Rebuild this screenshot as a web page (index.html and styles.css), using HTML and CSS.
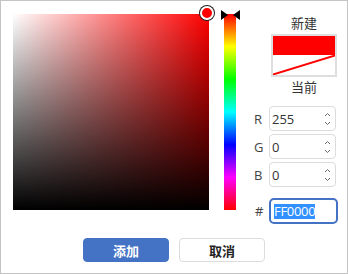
FILE: index.html
```html
<!DOCTYPE html>
<html lang="zh">
<head>
<meta charset="utf-8">
<link rel="stylesheet" href="styles.css">
</head>
<body>
<div class="dialog">
  <div class="main">
    <div class="sv">
      <div class="sv-white"></div>
      <div class="sv-black"></div>
      <div class="sv-handle"></div>
    </div>
    <div class="hue">
      <svg class="hue-marker" width="20" height="12" viewBox="0 0 20 12">
        <polygon points="0,1 7,6 0,11" fill="#000"/>
        <polygon points="19,1 12,6 19,11" fill="#000"/>
      </svg>
    </div>
    <div class="side">
      <div class="preview">
        <div class="cap">新建</div>
        <div class="swatch">
          <div class="sw-new"></div>
          <div class="sw-old">
            <svg width="62" height="20" viewBox="0 0 62 20"><line x1="0" y1="19.5" x2="62" y2="0.5" stroke="#ff0000" stroke-width="2"/></svg>
          </div>
        </div>
        <div class="cap">当前</div>
      </div>
      <div class="fields">
        <span class="lbl">R</span>
        <div class="num"><span class="val">255</span><span class="spin"><svg width="7" height="16" viewBox="0 0 7 16"><path d="M1 5 L3.5 2.5 L6 5" fill="none" stroke="#666" stroke-width="1"/><path d="M1 11 L3.5 13.5 L6 11" fill="none" stroke="#666" stroke-width="1"/></svg></span></div>
        <span class="lbl">G</span>
        <div class="num"><span class="val">0</span><span class="spin"><svg width="7" height="16" viewBox="0 0 7 16"><path d="M1 5 L3.5 2.5 L6 5" fill="none" stroke="#666" stroke-width="1"/><path d="M1 11 L3.5 13.5 L6 11" fill="none" stroke="#666" stroke-width="1"/></svg></span></div>
        <span class="lbl">B</span>
        <div class="num"><span class="val">0</span><span class="spin"><svg width="7" height="16" viewBox="0 0 7 16"><path d="M1 5 L3.5 2.5 L6 5" fill="none" stroke="#666" stroke-width="1"/><path d="M1 11 L3.5 13.5 L6 11" fill="none" stroke="#666" stroke-width="1"/></svg></span></div>
      </div>
      <div class="hexrow">
        <span class="lbl">#</span>
        <div class="hex"><span class="sel">FF0000</span></div>
      </div>
    </div>
  </div>
  <div class="buttons">
    <button class="btn primary">添加</button>
    <button class="btn">取消</button>
  </div>
</div>
</body>
</html>
```
FILE: styles.css
```css
html, body {
  margin: 0;
  padding: 0;
  background: #fff;
}
.dialog {
  width: 348px;
  height: 274px;
  box-sizing: border-box;
  border: 1px solid #c4c4c4;
  font-family: "Open Sans", "Noto Sans CJK SC", sans-serif;
  font-size: 13px;
  color: #333;
  display: flex;
  flex-direction: column;
}
.main {
  display: flex;
  padding: 13px 0 0 12px;
  height: 196px;
}
.sv {
  position: relative;
  width: 196px;
  height: 196px;
  background: #ff0000;
  flex: none;
}
.sv-white, .sv-black {
  position: absolute;
  inset: 0;
}
.sv-white {
  background: linear-gradient(to right, #fff, rgba(255,255,255,0));
}
.sv-black {
  background: linear-gradient(to bottom, rgba(0,0,0,0), #000);
}
.sv-handle {
  position: absolute;
  left: 187px;
  top: -8px;
  width: 10px;
  height: 10px;
  border-radius: 50%;
  background: #ff0000;
  border: 2px solid #fff;
  box-shadow: 0 0 0 1px #222;
}
.hue {
  position: relative;
  margin-left: 15px;
  width: 12px;
  height: 196px;
  flex: none;
  border-radius: 3px 3px 0 0;
  background: linear-gradient(to bottom, #f00 0%, #ff0 16.66%, #0f0 33.33%, #0ff 50%, #00f 66.66%, #f0f 83.33%, #f00 100%);
}
.hue-marker {
  position: absolute;
  left: -3px;
  top: -5px;
}
.side {
  margin-left: 17px;
  width: 86px;
  flex: none;
  display: flex;
  flex-direction: column;
}
.preview {
  display: flex;
  flex-direction: column;
  align-items: center;
  padding-left: 16px;
  margin-top: 0;
}
.cap {
  font-family: "Noto Sans CJK SC", sans-serif;
  font-size: 13px;
  line-height: 18px;
  height: 18px;
  color: #333;
}
.swatch {
  width: 62px;
  height: 39px;
  border: 2px solid #dedede;
  margin: 2px 0 1px;
  display: flex;
  flex-direction: column;
}
.sw-new {
  height: 19px;
  background: #ff0000;
}
.sw-old {
  height: 20px;
  background: #fff;
}
.sw-old svg {
  display: block;
}
.fields {
  display: grid;
  grid-template-columns: 16px 67px;
  row-gap: 3px;
  margin-top: 10px;
}
.lbl {
  font-size: 13px;
  color: #444;
  display: flex;
  align-items: center;
  padding-left: 1px;
}
.num {
  height: 25px;
  box-sizing: border-box;
  border: 1px solid #dcdcdc;
  border-radius: 4px;
  display: flex;
  align-items: center;
  justify-content: space-between;
  padding: 0 4px 0 2px;
}
.val {
  font-size: 13px;
  color: #333;
}
.spin svg {
  display: block;
}
.hexrow {
  display: flex;
  margin-top: 11px;
}
.hexrow .lbl {
  width: 14px;
  padding-left: 2px;
}
.hex {
  width: 69px;
  height: 26px;
  box-sizing: border-box;
  border: 2px solid #4472c4;
  border-radius: 5px;
  display: flex;
  align-items: center;
  padding-left: 3px;
}
.sel {
  background: #3390ff;
  color: #fff;
  font-size: 13px;
  line-height: 15px;
  letter-spacing: -0.3px;
}
.buttons {
  display: flex;
  justify-content: center;
  gap: 10px;
  margin-top: 28px;
}
.btn {
  width: 86px;
  height: 24px;
  box-sizing: border-box;
  border: 1px solid #dcdcdc;
  border-radius: 4px;
  background: #fff;
  color: #222;
  font-family: "Noto Sans CJK SC", sans-serif;
  font-size: 13px;
  font-weight: bold;
  padding: 0;
}
.btn.primary {
  background: #4472c4;
  border-color: #4472c4;
  color: #fff;
}
```
